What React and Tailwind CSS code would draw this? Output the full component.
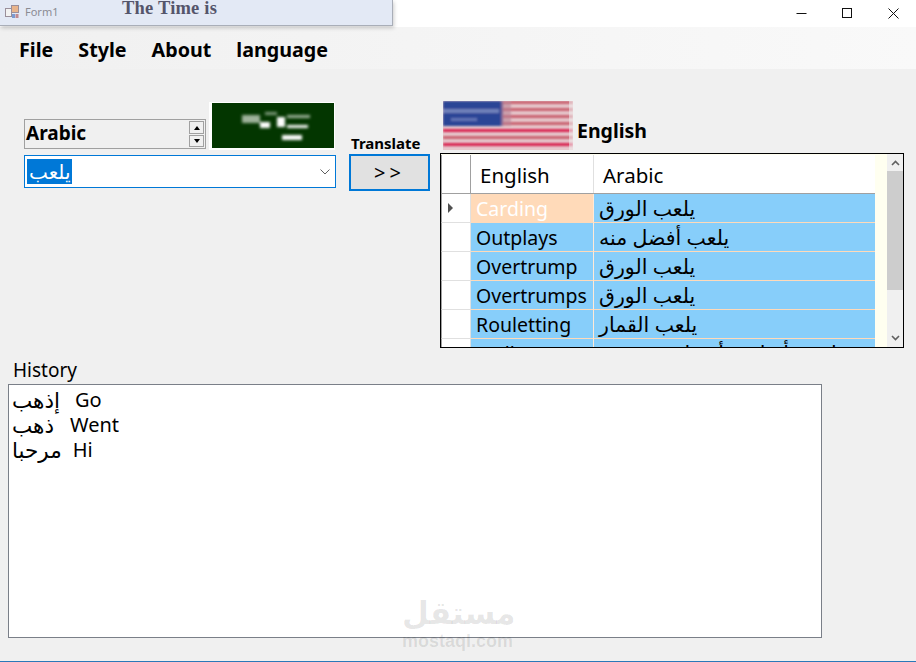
import React from 'react';

const rows = [
  { en: 'Carding', ar: 'يلعب الورق', current: true },
  { en: 'Outplays', ar: 'يلعب أفضل منه' },
  { en: 'Overtrump', ar: 'يلعب الورق' },
  { en: 'Overtrumps', ar: 'يلعب الورق' },
  { en: 'Rouletting', ar: 'يلعب القمار' },
  { en: 'Wallops', ar: 'يلعب بأسلوب أفضل من غيره في اللعبة' },
];

const history = [
  { ar: 'إذهب', en: 'Go', gap: 'gap-[15px]' },
  { ar: 'ذهب', en: 'Went', gap: 'gap-[16px]' },
  { ar: 'مرحبا', en: 'Hi', gap: 'gap-[11px]' },
];

function SaudiFlag() {
  return (
    <svg width="126" height="48" viewBox="0 0 126 48" className="block">
      <defs>
        <filter id="sa-blur"><feGaussianBlur stdDeviation="1.5" /></filter>
      </defs>
      <rect width="126" height="48" fill="#fff" />
      <rect x="3" y="1" width="122" height="45" fill="#033600" />
      <g filter="url(#sa-blur)">
        <rect x="33" y="13" width="18" height="8" fill="#9fb39b" />
        <rect x="51" y="20" width="10" height="6" fill="#ffffff" />
        <rect x="68" y="15" width="8" height="10" fill="#ffffff" />
        <rect x="78" y="13" width="23" height="3" fill="#9fb39b" />
        <rect x="78" y="23" width="21" height="3" fill="#ffffff" />
        <rect x="73" y="33" width="20" height="5" fill="#ffffff" />
        <rect x="56" y="10" width="12" height="3" fill="#7f9a7b" />
      </g>
    </svg>
  );
}

function UsFlag() {
  const stripes = [0, 7, 14, 21, 28, 35, 42];
  return (
    <svg width="130" height="49" viewBox="0 0 130 49" className="block">
      <defs>
        <filter id="us-blur"><feGaussianBlur stdDeviation="1.2 0.8" /></filter>
      </defs>
      <rect width="130" height="49" fill="#e6c8cc" />
      <g filter="url(#us-blur)">
        {stripes.map((y) => (
          <rect key={y} y={y} x="0" width="130" height="3" fill={y === 28 || y === 42 ? '#d8244f' : '#c9606f'} />
        ))}
        <rect x="0" y="0" width="60" height="25" fill="#2c4596" />
        <rect x="0" y="8" width="56" height="4" fill="#8c9ac8" opacity="0.7" />
        <rect x="8" y="17" width="26" height="3" fill="#6172b4" />
        <rect x="58" y="0" width="10" height="25" fill="#b98496" opacity="0.6" />
      </g>
      <rect x="126" width="4" height="49" fill="#f0f0f0" opacity="0.55" />
    </svg>
  );
}

function Arrow({ up, className }) {
  return (
    <svg width="9" height="6" viewBox="0 0 9 6" className={className}>
      <path d={up ? 'M1 5 L4.5 1.5 L8 5' : 'M1 1 L4.5 4.5 L8 1'} fill="none" stroke="#606060" strokeWidth="1.6" />
    </svg>
  );
}

export default function App() {
  return (
    <div className="relative flex h-[662px] w-[916px] flex-col overflow-hidden bg-[#f0f0f0] text-black font-['Noto_Sans','DejaVu_Sans',sans-serif]">
      {/* title bar */}
      <div className="flex h-[27px] justify-end bg-white">
        <div className="flex w-[46px] items-center justify-center">
          <svg width="11" height="11" viewBox="0 0 11 11"><path d="M0.5 5.5H10.5" stroke="#111" strokeWidth="1" /></svg>
        </div>
        <div className="flex w-[46px] items-center justify-center">
          <svg width="11" height="11" viewBox="0 0 11 11"><rect x="0.5" y="0.5" width="9" height="9" fill="none" stroke="#111" /></svg>
        </div>
        <div className="flex w-[46px] items-center justify-center">
          <svg width="11" height="11" viewBox="0 0 11 11"><path d="M0.5 0.5L10.5 10.5M10.5 0.5L0.5 10.5" stroke="#111" /></svg>
        </div>
      </div>

      {/* other window behind */}
      <div className="absolute left-0 top-0 flex h-[26px] w-[393px] border-b border-r border-[#a9aeb8] bg-[#e3e9f5] shadow-[1px_2px_4px_rgba(0,0,0,0.2)]">
        <svg width="14" height="14" viewBox="0 0 14 14" className="ml-[5px] mt-[5px]">
          <rect x="0.5" y="3.5" width="6" height="8" fill="#f2f2f2" stroke="#9a8f9a" />
          <rect x="6.5" y="0.5" width="7" height="7" fill="#e8b48c" stroke="#9a8f9a" />
          <rect x="7" y="9" width="3" height="4" fill="#7a9ad0" />
          <rect x="10.5" y="9" width="3" height="4" fill="#c08a90" />
        </svg>
        <span className="ml-[6px] mt-[4px] text-[11px] leading-[15px] text-[#8b8b93]">Form1</span>
        <span className="absolute left-[122px] top-[-2px] font-['Liberation_Serif',serif] text-[18.5px] font-bold leading-[20px] tracking-[0.2px] text-[#55556b]">
          The Time is
        </span>
      </div>

      {/* menu */}
      <div className="flex h-[42px] items-center gap-[25px] bg-gradient-to-r from-[#f0f0f0] to-[#f9f9f9] pl-[19px] pt-[3px] text-[19.7px] font-bold">
        <span>File</span>
        <span>Style</span>
        <span>About</span>
        <span>language</span>
      </div>

      {/* translate area */}
      <div className="flex h-[285px] pl-[24px]">
        <div className="w-[312px] pt-[33px]">
          <div className="flex items-end">
            <div className="flex h-[30px] w-[182px] items-center justify-between border border-[#a0a0a0] bg-[#f0f0f0] pl-[1px] pr-[1px]">
              <span className="pb-[2px] text-[19px] font-bold leading-none">Arabic</span>
              <div className="flex flex-col gap-[1px]">
                <div className="flex h-[13px] w-[15px] items-center justify-center border border-[#a0a0a0]">
                  <span className="h-0 w-0 border-x-[3px] border-b-[4px] border-x-transparent border-b-black" />
                </div>
                <div className="flex h-[12px] w-[15px] items-center justify-center border border-[#a0a0a0]">
                  <span className="h-0 w-0 border-x-[3px] border-t-[4px] border-x-transparent border-t-black" />
                </div>
              </div>
            </div>
            <div className="ml-[3px] mb-[-1px]"><SaudiFlag /></div>
          </div>
          <div className="mt-[6px] flex h-[33px] items-center justify-between border border-[#0078d7] bg-white pl-[2px] pr-[3px]">
            <span className="bg-[#0078d7] px-[2px] text-[20px] leading-[25px] text-white">يلعب</span>
            <svg width="12" height="8" viewBox="0 0 12 8" className="mr-[1px]">
              <path d="M1.5 1.5 L6 6 L10.5 1.5" fill="none" stroke="#606060" />
            </svg>
          </div>
        </div>

        <div className="ml-[13px] w-[81px] pt-[64px]">
          <div className="pl-[2px] pb-[1px] text-[15px] font-bold leading-[20px]">Translate</div>
          <button className="flex h-[37px] w-[81px] items-center justify-center border-2 border-[#0078d7] bg-[#e1e1e1] text-[20px] tracking-[4px]">
            &gt;&gt;
          </button>
        </div>

        <div className="ml-[10px] w-[464px] pt-[32px]">
          <div className="flex items-end pl-[3px]">
            <UsFlag />
            <span className="mb-[6px] ml-[4px] text-[19.5px] font-bold leading-[26px]">English</span>
          </div>
          <div className="mt-[3px] flex h-[195px] overflow-hidden border border-black bg-[#fffff0]">
            <div className="w-[434px] shrink-0 pt-[1px]">
              <div className="flex h-[39px] border-b border-[#a0a0a0] bg-white text-[20.5px]">
                <div className="w-[30px] border-l border-r border-[#a0a0a0] bg-white" />
                <div className="flex w-[123px] items-center border-r border-[#e0e0e0] pl-[9px] pt-[2px]">English</div>
                <div className="flex flex-1 items-center pl-[9px] pt-[2px]">Arabic</div>
              </div>
              {rows.map((r) => (
                <div key={r.en} className="flex h-[29px] text-[19.5px] leading-[29px]">
                  <div className="flex w-[30px] items-center border-b border-l border-r border-b-[#e0e0e0] border-l-[#a0a0a0] border-r-[#e0e0e0] bg-white pl-[6px]">
                    {r.current && <span className="h-0 w-0 border-y-[5px] border-l-[5px] border-y-transparent border-l-[#505050]" />}
                  </div>
                  <div className={`w-[123px] border-b border-r border-b-[#ffdab9] border-r-[#ffe9d6] pl-[5px] ${r.current ? 'bg-[#ffdab9] text-white' : 'bg-[#87cefa]'}`}>
                    {r.en}
                  </div>
                  <div className="flex-1 border-b border-[#ffdab9] bg-[#87cefa] pl-[5px] text-[20.5px]">{r.ar}</div>
                </div>
              ))}
            </div>
            <div className="ml-[12px] flex w-[16px] flex-col items-center justify-between bg-[#f0f0f0] py-[6px]">
              <Arrow up />
              <Arrow />
            </div>
          </div>
        </div>
      </div>

      {/* scrollbar thumb */}
      <div className="absolute left-[887px] top-[171px] h-[119px] w-[16px] bg-[#cdcdcd]" />

      {/* history */}
      <div className="flex-1 pl-[8px] pt-[3px]">
        <div className="pl-[5px] text-[19px] leading-[27px]">History</div>
        <div className="h-[254px] w-[814px] border border-[#7a7f88] bg-white pl-[3px] pt-[2px] text-[20px] leading-[25px]">
          {history.map((h) => (
            <div key={h.en} className={`flex ${h.gap}`}>
              <span className="text-[21.5px]">{h.ar}</span>
              <span>{h.en}</span>
            </div>
          ))}
        </div>
      </div>

      <div className="h-[1px] bg-[#2a78b8]" />

      {/* watermark */}
      <div className="pointer-events-none absolute left-[402px] top-[592px] w-[110px] text-center text-[rgba(0,0,0,0.1)]">
        <div className="text-[31px] font-bold leading-[40px]">مستقل</div>
        <div className="font-['Liberation_Sans',sans-serif] text-[18px] font-bold leading-[18px]">mostaql.com</div>
      </div>
    </div>
  );
}
